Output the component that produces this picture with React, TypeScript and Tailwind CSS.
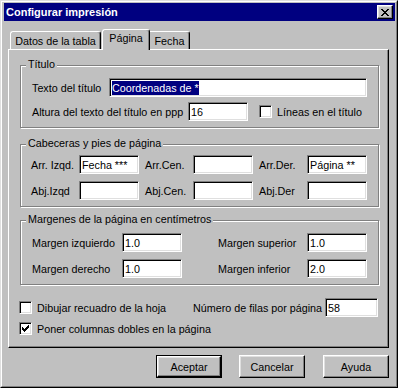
import React from "react";

const sunken =
  "bg-white border border-t-[#808080] border-l-[#808080] border-b-white border-r-white shadow-[inset_1px_1px_0_#000,inset_-1px_-1px_0_#dfdfdf]";
const raised =
  "bg-[#c0c0c0] border border-t-white border-l-white border-b-black border-r-black shadow-[inset_-1px_-1px_0_#808080,inset_1px_1px_0_#dfdfdf]";

function Field({ className = "", children }: { className?: string; children?: React.ReactNode }) {
  return (
    <div className={`h-[19px] shrink-0 pl-[2px] flex items-center whitespace-nowrap overflow-hidden ${sunken} ${className}`}>
      {children}
    </div>
  );
}

function Check({ checked = false }: { checked?: boolean }) {
  return (
    <div className={`w-[13px] h-[13px] shrink-0 flex items-center justify-center ${sunken}`}>
      {checked && (
        <svg width="7" height="7" viewBox="0 0 7 7" shapeRendering="crispEdges">
          <rect x="6" y="0" width="1" height="1" fill="#000" />
          <rect x="5" y="1" width="2" height="1" fill="#000" />
          <rect x="0" y="2" width="1" height="1" fill="#000" />
          <rect x="4" y="2" width="3" height="1" fill="#000" />
          <rect x="0" y="3" width="2" height="1" fill="#000" />
          <rect x="3" y="3" width="3" height="1" fill="#000" />
          <rect x="0" y="4" width="5" height="1" fill="#000" />
          <rect x="1" y="5" width="3" height="1" fill="#000" />
          <rect x="2" y="6" width="1" height="1" fill="#000" />
        </svg>
      )}
    </div>
  );
}

function Group({ title, className = "", children }: { title: string; className?: string; children: React.ReactNode }) {
  return (
    <div className={`relative ml-[11px] w-[359px] border border-[#808080] shadow-[inset_1px_1px_0_#fff,1px_1px_0_#fff] ${className}`}>
      <span className="absolute left-[5px] top-[-9px] bg-[#c0c0c0] px-[2px] leading-[14px]">{title}</span>
      {children}
    </div>
  );
}

function Button({ label, primary = false, className = "" }: { label: string; primary?: boolean; className?: string }) {
  if (primary) {
    return (
      <div className={`w-[66px] h-[23px] border border-black ${className}`}>
        <div className={`h-full flex items-center justify-center ${raised}`}>{label}</div>
      </div>
    );
  }
  return <div className={`w-[66px] h-[23px] flex items-center justify-center ${raised} ${className}`}>{label}</div>;
}

function CloseGlyph() {
  const rows = [
    [0, 2, 6, 2],
    [1, 2, 5, 2],
    [2, 4],
    [3, 2],
    [2, 4],
    [1, 2, 5, 2],
    [0, 2, 6, 2],
  ];
  return (
    <svg width="8" height="7" viewBox="0 0 8 7" shapeRendering="crispEdges">
      {rows.map((r, y) =>
        r.length === 4 ? (
          <g key={y}>
            <rect x={r[0]} y={y} width={r[1]} height="1" fill="#000" />
            <rect x={r[2]} y={y} width={r[3]} height="1" fill="#000" />
          </g>
        ) : (
          <rect key={y} x={r[0]} y={y} width={r[1]} height="1" fill="#000" />
        )
      )}
    </svg>
  );
}

export default function App() {
  return (
    <div className="w-[398px] h-[388px] bg-[#c0c0c0] border border-t-[#dfdfdf] border-l-[#dfdfdf] border-b-black border-r-black font-['Liberation_Sans',Arial,sans-serif] text-[10.75px] leading-[14px] text-black">
      <div className="h-full border border-t-white border-l-white border-b-[#808080] border-r-[#808080] pt-[1px] pl-[2px] pr-[1px] flex flex-col">
        {/* Title bar */}
        <div className="h-[18px] shrink-0 bg-[#000080] flex items-center justify-between pl-[2px]">
          <span className="text-white font-bold text-[11px] leading-[18px]">Configurar impresión</span>
          <div className={`w-[16px] h-[14px] mr-[2px] flex items-center justify-center ${raised}`}>
            <CloseGlyph />
          </div>
        </div>

        {/* Tabs */}
        <div className="mt-[8px] h-[20px] shrink-0 flex items-end pl-[6px]">
          <div className="w-[91px] h-[18px] border-l border-t border-r border-l-white border-t-white border-r-black rounded-t-[3px] shadow-[inset_-1px_0_0_#808080] text-center pt-[2px]">
            Datos de la tabla
          </div>
          <div className="relative z-10 ml-[1px] w-[48px] h-[21px] mb-[-1px] bg-[#c0c0c0] border-l border-t border-r border-l-white border-t-white border-r-black rounded-t-[3px] shadow-[inset_-1px_0_0_#808080] text-center pt-[1px]">
            Página
          </div>
          <div className="w-[40px] h-[18px] border-t border-r border-t-white border-r-black rounded-tr-[3px] shadow-[inset_-1px_0_0_#808080] text-center pt-[2px]">
            Fecha
          </div>
        </div>

        {/* Tab panel */}
        <div className="ml-[4px] w-[381px] h-[299px] shrink-0 border border-t-white border-l-white border-b-black border-r-black shadow-[inset_-1px_-1px_0_#808080] flex flex-col">
          <Group title="Título" className="mt-[15px] h-[63px]">
            <div className="pt-[12px] pl-[11px] pr-[11px]">
              <div className="flex items-center h-[19px]">
                <span className="w-[77px] shrink-0">Texto del título</span>
                <Field className="flex-1">
                  <span className="bg-[#000080] text-white">Coordenadas de *</span>
                </Field>
              </div>
              <div className="mt-[5px] flex items-center h-[19px]">
                <span className="w-[156px] shrink-0 whitespace-nowrap">Altura del texto del título en ppp</span>
                <Field className="w-[60px]">16</Field>
                <div className="ml-[11px]">
                  <Check />
                </div>
                <span className="ml-[5px]">Líneas en el título</span>
              </div>
            </div>
          </Group>

          <Group title="Cabeceras y pies de página" className="mt-[16px] h-[63px]">
            <div className="pt-[10px] pl-[10px]">
              <div className="flex items-center h-[19px]">
                <span className="w-[48px]">Arr. Izqd.</span>
                <Field className="w-[60px]">Fecha ***</Field>
                <span className="ml-[6px] w-[48px]">Arr.Cen.</span>
                <Field className="w-[60px]" />
                <span className="ml-[6px] w-[48px]">Arr.Der.</span>
                <Field className="w-[60px]">Página **</Field>
              </div>
              <div className="mt-[7px] flex items-center h-[19px]">
                <span className="w-[48px]">Abj.Izqd</span>
                <Field className="w-[60px]" />
                <span className="ml-[6px] w-[48px]">Abj.Cen.</span>
                <Field className="w-[60px]" />
                <span className="ml-[6px] w-[48px]">Abj.Der</span>
                <Field className="w-[60px]" />
              </div>
            </div>
          </Group>

          <Group title="Margenes de la página en centímetros" className="mt-[13px] h-[65px]">
            <div className="pt-[12px] pl-[11px]">
              <div className="flex items-center h-[19px]">
                <span className="w-[90px]">Margen izquierdo</span>
                <Field className="w-[60px]">1.0</Field>
                <span className="ml-[36px] w-[89px]">Margen superior</span>
                <Field className="w-[60px]">1.0</Field>
              </div>
              <div className="mt-[7px] flex items-center h-[19px]">
                <span className="w-[90px]">Margen derecho</span>
                <Field className="w-[60px]">1.0</Field>
                <span className="ml-[36px] w-[89px]">Margen inferior</span>
                <Field className="w-[60px]">2.0</Field>
              </div>
            </div>
          </Group>

          <div className="mt-[13px] pl-[10px] flex items-center h-[19px]">
            <Check />
            <span className="ml-[5px] w-[156px] whitespace-nowrap">Dibujar recuadro de la hoja</span>
            <span className="w-[132px] whitespace-nowrap">Número de filas por página</span>
            <Field className="w-[53px]">58</Field>
          </div>
          <div className="mt-[5px] pl-[10px] flex items-center h-[13px]">
            <Check checked />
            <span className="ml-[5px] whitespace-nowrap">Poner columnas dobles en la página</span>
          </div>
        </div>

        {/* Buttons */}
        <div className="mt-[7px] pr-[6px] flex justify-end">
          <Button label="Aceptar" primary className="mr-[17px]" />
          <Button label="Cancelar" className="mr-[18px]" />
          <Button label="Ayuda" />
        </div>
      </div>
    </div>
  );
}
